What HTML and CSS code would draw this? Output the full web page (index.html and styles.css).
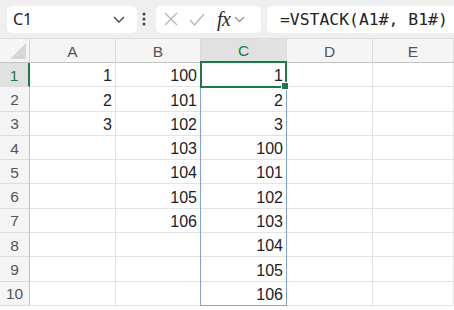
FILE: index.html
```html
<!DOCTYPE html>
<html>
<head>
  <meta charset="utf-8">
  <title>VSTACK</title>
  <link rel="stylesheet" href="styles.css">
</head>
<body>
  <!-- Formula bar -->
  <div class="toolbar">
    <div class="namebox">
      <span>C1</span>
      <svg class="chev" width="12" height="7" viewBox="0 0 12 7"><path d="M1 1l5 5 5-5" fill="none" stroke="#444" stroke-width="1.3"/></svg>
    </div>
    <svg class="dots" width="4" height="14" viewBox="0 0 4 14"><circle cx="2" cy="2" r="1.5" fill="#444"/><circle cx="2" cy="7" r="1.5" fill="#444"/><circle cx="2" cy="12" r="1.5" fill="#444"/></svg>
    <div class="fxbox">
      <svg width="14" height="14" viewBox="0 0 14 14"><path d="M1 1l12 12M13 1L1 13" stroke="#b4b4b4" stroke-width="1.2"/></svg>
      <svg width="16" height="13" viewBox="0 0 16 13"><path d="M1 7l4.5 5L15 1" fill="none" stroke="#b4b4b4" stroke-width="1.2"/></svg>
      <span class="fx">fx</span>
      <svg class="chev" width="11" height="6" viewBox="0 0 11 6"><path d="M1 1l4.5 4.5L10 1" fill="none" stroke="#888" stroke-width="1.1"/></svg>
    </div>
    <div class="formula">=VSTACK(A1#, B1#)</div>
  </div>

  <!-- Sheet -->
  <div class="sheet">
    <div class="grid" id="grid">
      <div class="corner"><svg width="18" height="18" viewBox="0 0 18 18"><path d="M17 1v16H1z" fill="#d6d6d6"/></svg></div>
      <div class="colhead">A</div>
      <div class="colhead">B</div>
      <div class="colhead sel">C</div>
      <div class="colhead">D</div>
      <div class="colhead">E</div>
    </div>
    <div class="spill"></div>
    <div class="active"><span class="handle"></span></div>
  </div>

  <script>
    const colA = [1, 2, 3];
    const colB = [100, 101, 102, 103, 104, 105, 106];
    const colC = colA.concat(colB);
    const grid = document.getElementById('grid');

    for (let r = 0; r < 10; r++) {
      const head = document.createElement('div');
      head.className = r === 0 ? 'rowhead sel' : 'rowhead';
      head.textContent = r + 1;
      grid.appendChild(head);

      [colA, colB, colC, [], []].forEach(col => {
        const cell = document.createElement('div');
        cell.className = 'cell';
        cell.textContent = col[r] !== undefined ? col[r] : '';
        grid.appendChild(cell);
      });
    }
  </script>
</body>
</html>
```

FILE: styles.css
```css
/* Excel-like sheet */
body {
  margin: 0;
  width: 454px;
  height: 310px;
  overflow: hidden;
  background: #ffffff;
  font-family: 'Liberation Sans', Arial, sans-serif;
}
.toolbar {
  display: flex;
  align-items: center;
  height: 38px;
  padding: 0 0 0 7px;
  background: #efefef;
  box-sizing: border-box;
}
.namebox {
  display: flex;
  align-items: center;
  justify-content: space-between;
  width: 130px;
  height: 27px;
  padding: 0 12px 0 6px;
  box-sizing: border-box;
  background: #ffffff;
  border-radius: 5px;
  font-family: 'Noto Sans', sans-serif;
  font-size: 16px;
  color: #222;
}
.dots {
  margin: 0 10px 0 5px;
}
.fxbox {
  display: flex;
  align-items: center;
  gap: 11px;
  width: 105px;
  height: 27px;
  padding: 0 0 0 8px;
  box-sizing: border-box;
  background: #ffffff;
  border-radius: 5px;
}
.fxbox .fx {
  font-family: 'Liberation Serif', serif;
  font-style: italic;
  font-size: 20px;
  color: #2a2a2a;
  margin-left: 1px;
  letter-spacing: -0.5px;
}
.fxbox .chev {
  margin-left: -7px;
}
.formula {
  flex: 1;
  height: 27px;
  margin-left: 6px;
  padding-left: 13px;
  line-height: 27px;
  background: #ffffff;
  border-radius: 5px 0 0 5px;
  font-family: 'DejaVu Sans Mono', monospace;
  font-size: 16.4px;
  color: #222;
  white-space: nowrap;
}
.sheet {
  position: relative;
  border-top: 1px solid #dcdcdc;
}
.grid {
  display: grid;
  grid-template-columns: 30px 86px 85px 86px 86px 1fr;
  grid-template-rows: 24px repeat(10, 24.3px);
}
.corner,
.colhead,
.rowhead {
  display: flex;
  align-items: center;
  justify-content: center;
  background: #f5f5f5;
  font-size: 15.5px;
  color: #555;
  box-sizing: border-box;
}
.corner {
  align-items: flex-end;
  justify-content: flex-end;
  padding: 0 2px 2px 0;
  border-right: 1px solid #d4d4d4;
  border-bottom: 1px solid #c4c4c4;
}
.colhead {
  border-right: 1px solid #dcdcdc;
  border-bottom: 1px solid #c4c4c4;
  padding-top: 2px;
}
.rowhead {
  border-right: 1px solid #c4c4c4;
  border-bottom: 1px solid #dcdcdc;
  padding-top: 2px;
}
.colhead.sel {
  background: #e1e1e1;
  color: #1d7a45;
  border-bottom: 2px solid #1d7a45;
}
.rowhead.sel {
  background: #e1e1e1;
  color: #1d7a45;
  border-right: 2px solid #1d7a45;
}
.cell {
  display: flex;
  align-items: flex-end;
  justify-content: flex-end;
  padding: 0 3px 1px 0;
  line-height: 18px;
  font-size: 16px;
  color: #222;
  border-right: 1px solid #e3e3e3;
  border-bottom: 1px solid #e3e3e3;
  box-sizing: border-box;
}
.spill {
  position: absolute;
  left: 200px;
  top: 23px;
  width: 87px;
  height: 244px;
  border: 1px solid #7fa2da;
  box-sizing: border-box;
}
.active {
  position: absolute;
  left: 200px;
  top: 22px;
  width: 87px;
  height: 27px;
  border: 2px solid #1d7a45;
  box-sizing: border-box;
}
.handle {
  position: absolute;
  right: -4px;
  bottom: -4px;
  width: 6px;
  height: 6px;
  background: #1d7a45;
  border: 1px solid #ffffff;
}
```
